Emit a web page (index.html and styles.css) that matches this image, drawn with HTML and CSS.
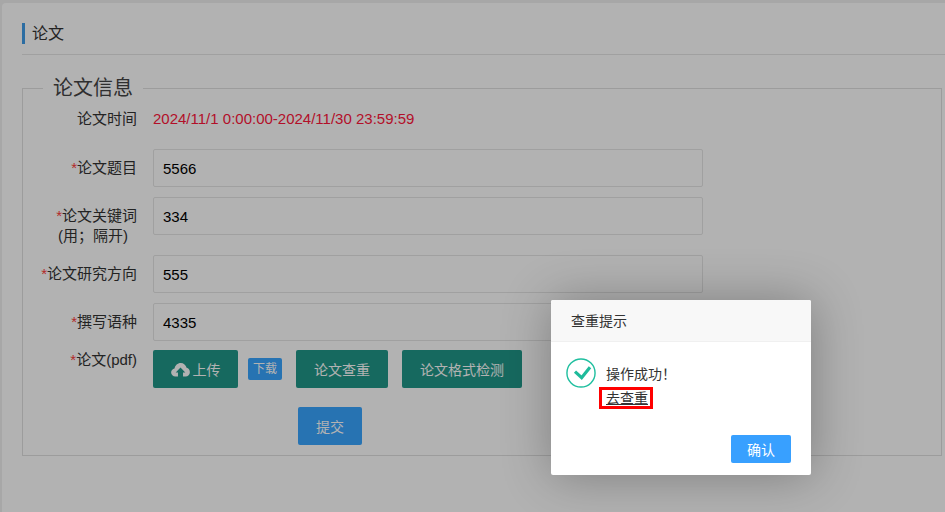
FILE: index.html
```html
<!DOCTYPE html>
<html lang="zh-CN">
<head>
<meta charset="utf-8">
<title>论文</title>
<link rel="stylesheet" href="styles.css">
</head>
<body>
<main class="panel">
  <h1 class="page-title"><span class="page-title-text">论文</span></h1>
  <form>
    <fieldset class="group">
      <legend class="group-legend">论文信息</legend>
      <div class="row row-time">
        <label class="row-label row-label-flat">论文时间</label>
        <span class="date-range">2024/11/1 0:00:00-2024/11/30 23:59:59</span>
      </div>
      <div class="row row-after-time">
        <label class="row-label"><i class="req">*</i>论文题目</label>
        <input class="text-input" value="5566">
      </div>
      <div class="row row-tall">
        <label class="row-label"><i class="req">*</i>论文关键词<span class="label-note">(用；隔开)</span></label>
        <input class="text-input" value="334">
      </div>
      <div class="row">
        <label class="row-label"><i class="req">*</i>论文研究方向</label>
        <input class="text-input" value="555">
      </div>
      <div class="row row-lang">
        <label class="row-label"><i class="req">*</i>撰写语种</label>
        <input class="text-input" value="4335">
      </div>
      <div class="row row-files">
        <label class="row-label row-label-flat"><i class="req">*</i>论文(pdf)</label>
        <div class="file-actions">
          <button type="button" class="btn btn-teal btn-upload">
            <svg class="cloud" viewBox="0 0 20 16" aria-hidden="true"><path d="M4.6 15.5C2 15.5 0 13.6 0 11.2c0-2.100 1.500-3.900 3.600-4.300C4.200 3.600 6.900 1 10.200 1c3.100 0 5.700 2.200 6.300 5.200 2.100.4 3.500 2.300 3.500 4.600 0 2.600-2 4.700-4.600 4.700h-2.700v-4.200h2.400L10 5.900l-5.100 5.400h2.400v4.200z"/></svg>
            上传
          </button>
          <a class="badge-link">下载</a>
          <button type="button" class="btn btn-teal btn-check">论文查重</button>
          <button type="button" class="btn btn-teal btn-format">论文格式检测</button>
        </div>
      </div>
      <div class="submit-row">
        <button type="button" class="btn btn-blue">提交</button>
      </div>
    </fieldset>
  </form>
</main>
<div class="shade"></div>
<section class="dialog">
  <header class="dialog-head">查重提示</header>
  <div class="dialog-body">
    <svg class="ok-icon" viewBox="0 0 32 32" aria-hidden="true"><circle cx="16" cy="16" r="15" fill="none" stroke="#1fbf9f" stroke-width="1.500"/><path d="M9.600 14.600l7.100 6.400 8.900-11.100" fill="none" stroke="#1fbb9b" stroke-width="3.400"/></svg>
    <div class="dialog-text">
      <p class="dialog-msg">操作成功！</p>
      <a class="dialog-link">去查重</a>
    </div>
  </div>
  <footer class="dialog-foot"><button type="button" class="dialog-ok">确认</button></footer>
</section>
</body>
</html>
```
FILE: styles.css
```css
* { box-sizing: border-box; }
html, body { margin: 0; height: 512px; overflow: hidden; }
body {
  position: relative;
  padding: 3px 0 0 2px;
  background: #f0f0f0;
  color: #333;
  font-family: "Liberation Sans", "Noto Sans CJK SC", sans-serif;
  font-size: 15px;
}
.panel {
  height: 509px;
  padding: 20px 0 0 20px;
  background: #fff;
  border-top-left-radius: 4px;
}
.page-title {
  margin: 0;
  padding-bottom: 10px;
  border-bottom: 1px solid #e6e6e6;
  font-size: 16px;
  font-weight: 400;
  line-height: 21px;
}
.page-title-text {
  display: block;
  padding-left: 7px;
  border-left: 3px solid #3f9de8;
}
.group {
  margin: 19px 3px 0 0;
  padding: 0 0 10px;
  border: 1px solid #e0e0e0;
  min-width: 0;
}
.group-legend {
  margin-left: 20px;
  padding: 0 10px;
  color: #444;
  font-size: 20px;
  line-height: 28px;
}
.row { display: flex; align-items: flex-start; margin-bottom: 10px; }
.row-time { padding-top: 7px; margin-bottom: 20px; height: 27px; }
.row-tall { margin-bottom: 9px; }
.row-lang { margin-bottom: 9px; }
.row-files { margin-bottom: 19px; }
.row-label {
  flex: 0 0 114px;
  padding-top: 9px;
  color: #333;
  font-size: 15px;
  line-height: 20px;
  text-align: right;
}
.row-label-flat { padding-top: 0; }
.req { color: #ff3b3b; font-style: normal; }
.label-note { display: block; padding-right: 9px; }
.date-range {
  margin-left: 16px;
  color: #ff163c;
  line-height: 20px;
}
.text-input {
  display: block;
  width: 550px;
  height: 38px;
  margin-left: 16px;
  padding: 0 9px;
  border: 1px solid #e6e6e6;
  border-radius: 2px;
  background: #fff;
  color: #000;
  font: inherit;
  outline: 0;
}
.file-actions { display: flex; align-items: center; margin-left: 16px; }
.btn {
  height: 38px;
  border: 0;
  border-radius: 2px;
  color: #fff;
  font-family: inherit;
  font-size: 14px;
  padding: 0;
}
.btn-teal { background: #209789; }
.btn-blue { background: #38a5ff; width: 64px; }
.btn-upload {
  display: flex;
  align-items: center;
  justify-content: center;
  gap: 3px;
  width: 85px;
}
.cloud { width: 19px; height: 15px; fill: #fff; }
.badge-link {
  display: block;
  width: 34px;
  height: 22px;
  margin: 0 14px 0 10px;
  border-radius: 2px;
  background: #38a5ff;
  color: #fff;
  font-size: 12px;
  line-height: 22px;
  text-align: center;
}
.btn-check { width: 92px; margin-right: 14px; }
.btn-format { width: 120px; }
.submit-row { padding-left: 275px; }
.shade {
  position: absolute;
  inset: 0;
  background: rgba(0, 0, 0, .3);
}
.dialog {
  position: absolute;
  left: 551px;
  top: 300px;
  width: 260px;
  height: 175px;
  border-radius: 2px;
  background: #fff;
  box-shadow: 1px 1px 50px rgba(0, 0, 0, .3);
  font-size: 14px;
}
.dialog-head {
  height: 42px;
  padding-left: 20px;
  border-bottom: 1px solid #f0f0f0;
  border-radius: 2px 2px 0 0;
  background: #f8f8f8;
  color: #333;
  line-height: 42px;
}
.dialog-body { position: relative; height: 93px; padding: 21px 0 0 55px; }
.ok-icon { position: absolute; left: 15px; top: 16px; width: 30px; height: 30px; }
.dialog-text { line-height: 22px; color: #333; }
.dialog-msg { margin: 0 0 2px; }
.dialog-link {
  position: relative;
  display: block;
  height: 22px;
  line-height: 22px;
  text-decoration: underline;
}
.dialog-link::after {
  content: "";
  position: absolute;
  left: -7px;
  top: 0;
  box-sizing: border-box;
  width: 54px;
  height: 22px;
  border: 3px solid #f00;
}
.dialog-foot { display: flex; justify-content: flex-end; padding-right: 20px; }
.dialog-ok {
  width: 60px;
  height: 28px;
  padding: 0;
  border: 0;
  border-radius: 2px;
  background: #38a0ff;
  color: #fff;
  font: inherit;
}
```
